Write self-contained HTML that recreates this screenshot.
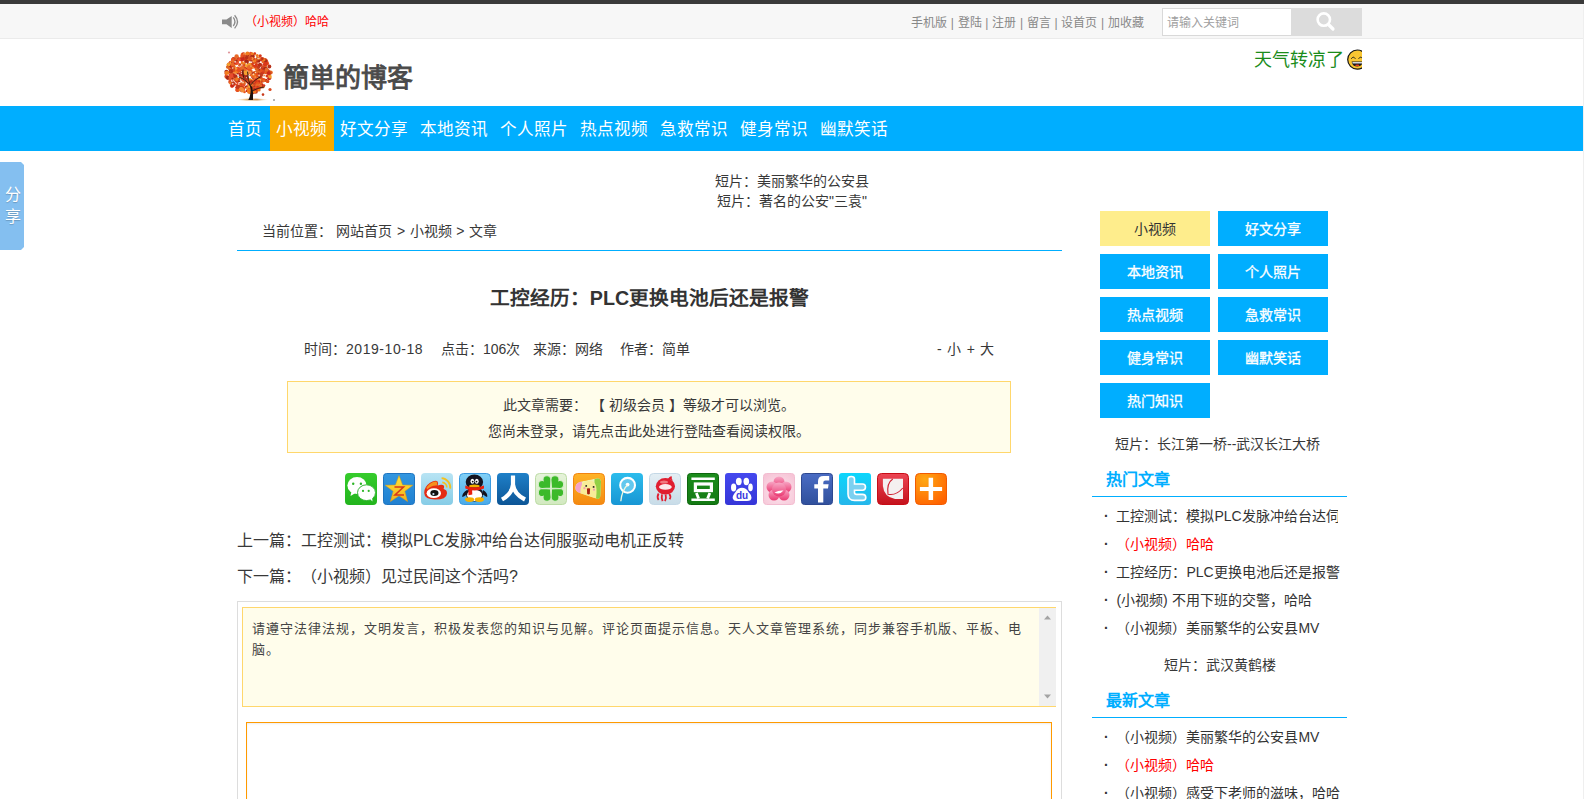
<!DOCTYPE html>
<html lang="zh-CN"><head><meta charset="utf-8">
<style>
*{margin:0;padding:0;box-sizing:border-box}
html,body{text-spacing-trim:space-all;width:1584px;height:799px;overflow:hidden;background:#fff;font-family:"Liberation Sans",sans-serif;color:#383838;font-size:14px}
.abs{position:absolute}
#topline{position:absolute;left:0;top:0;width:1584px;height:4px;background:#3a3a3a}
#topbar{position:absolute;left:0;top:4px;width:1584px;height:35px;background:#f7f7f7;border-bottom:1px solid #ebebeb}
.t12{font-size:12px;line-height:16px;white-space:nowrap}
#nav{position:absolute;left:0;top:106px;width:1584px;height:45px;background:#00aeff}
#nav .it{position:absolute;top:0;height:45px;line-height:47px;color:#fff;font-size:16.6px;padding:0 7.5px;white-space:nowrap;text-indent:-2px}
#nav .on{background:#f8ab00}
.side-btn{position:absolute;width:110px;height:35px;line-height:35px;padding-top:1px;text-align:center;color:#fff;background:#00aeff;font-size:14px;-webkit-text-stroke:0.3px #fff}
.li{position:absolute;left:1104px;font-size:14px;line-height:20px;white-space:nowrap;color:#333}
.red{color:#f00}
</style></head><body>
<div id="topline"></div>
<div id="topbar"></div>
<!-- speaker -->
<svg class="abs" style="left:218px;top:10px" width="26" height="24" viewBox="0 0 26 24"><path d="M4 9.6 L8.5 9.6 L13.7 5.9 L13.7 18 L8.5 14.2 L4 14.2 Z" fill="#8a8a8a"/><path d="M15.3 7.4 Q18.6 11.7 15.3 16" stroke="#8a8a8a" stroke-width="1.3" fill="none"/><path d="M16.6 5.3 Q22.4 11.8 16.6 18.4" stroke="#8a8a8a" stroke-width="1.3" fill="none"/></svg>
<div class="abs t12 red" style="left:245px;top:14px">（小视频）哈哈</div>
<div class="abs t12" style="left:911px;top:15px;color:#888;word-spacing:0.4px">手机版 | 登陆 | 注册 | 留言 | 设首页 | 加收藏</div>
<div class="abs" style="left:1162px;top:8px;width:130px;height:28px;background:#fff;border:1px solid #d9d9d9;border-right:none"></div>
<div class="abs t12" style="left:1167px;top:15px;color:#a0a0a0">请输入关键词</div>
<div class="abs" style="left:1291px;top:8px;width:71px;height:28px;background:#dcdcdc"></div>
<svg class="abs" style="left:1316px;top:12px" width="20" height="20" viewBox="0 0 20 20">
<circle cx="7.8" cy="7.6" r="6.2" stroke="#fff" stroke-width="2.6" fill="none"/>
<path d="M12.5 12.5l4.5 4.5" stroke="#fff" stroke-width="3.2" stroke-linecap="round"/>
</svg>

<!-- logo -->
<svg class="abs" style="left:222px;top:46px" width="56" height="58" viewBox="0 0 56 58"><defs><linearGradient id="gs" x1="0" x2="1"><stop offset="0" stop-color="#f6d9a0" stop-opacity="0"/><stop offset=".35" stop-color="#e0a050" stop-opacity=".8"/><stop offset=".65" stop-color="#c87828" stop-opacity=".8"/><stop offset="1" stop-color="#f6d9a0" stop-opacity="0"/></linearGradient></defs><ellipse cx="30" cy="53.6" rx="17" ry="1" fill="url(#gs)"/><circle cx="10.6" cy="31.3" r="2.2" fill="#f07a1e"/><circle cx="6.8" cy="32.4" r="1.3" fill="#f4a030"/><circle cx="8.9" cy="25.6" r="2.1" fill="#d9381a"/><circle cx="18.6" cy="29.3" r="1.7" fill="#e86a28"/><circle cx="15.1" cy="15.1" r="1.6" fill="#f07a1e"/><circle cx="16.6" cy="13.7" r="1.3" fill="#e8501c"/><circle cx="29.3" cy="22.4" r="1.1" fill="#e06420"/><circle cx="10.6" cy="16.3" r="1.5" fill="#c23a1e"/><circle cx="35.3" cy="14.6" r="1.9" fill="#f07a1e"/><circle cx="33.0" cy="27.0" r="1.9" fill="#a82818"/><circle cx="48.7" cy="26.5" r="2.1" fill="#e86a28"/><circle cx="26.0" cy="44.5" r="1.7" fill="#e8501c"/><circle cx="44.2" cy="34.4" r="1.6" fill="#b83018"/><circle cx="10.0" cy="39.8" r="2.1" fill="#e8501c"/><circle cx="31.4" cy="45.8" r="1.2" fill="#a82818"/><circle cx="40.5" cy="25.2" r="1.2" fill="#f28c3c"/><circle cx="32.3" cy="42.6" r="1.5" fill="#b83018"/><circle cx="15.6" cy="44.1" r="2.0" fill="#d9381a"/><circle cx="38.9" cy="39.6" r="1.1" fill="#f07a1e"/><circle cx="29.2" cy="18.6" r="1.8" fill="#f07a1e"/><circle cx="4.4" cy="25.7" r="2.0" fill="#a82818"/><circle cx="21.8" cy="21.4" r="1.6" fill="#e06420"/><circle cx="47.2" cy="26.9" r="2.3" fill="#c23a1e"/><circle cx="19.5" cy="44.8" r="1.4" fill="#a82818"/><circle cx="43.8" cy="26.4" r="1.8" fill="#e8501c"/><circle cx="36.8" cy="26.2" r="1.4" fill="#f4a030"/><circle cx="10.9" cy="15.0" r="1.6" fill="#d9381a"/><circle cx="40.9" cy="35.1" r="1.4" fill="#c23a1e"/><circle cx="14.6" cy="38.6" r="1.3" fill="#c23a1e"/><circle cx="9.7" cy="28.4" r="2.1" fill="#c8281c"/><circle cx="17.8" cy="18.7" r="1.4" fill="#c23a1e"/><circle cx="26.5" cy="35.6" r="2.0" fill="#d84a22"/><circle cx="33.7" cy="45.5" r="2.2" fill="#c23a1e"/><circle cx="30.8" cy="28.9" r="1.2" fill="#d84a22"/><circle cx="37.1" cy="24.5" r="1.9" fill="#b83018"/><circle cx="7.9" cy="36.0" r="1.7" fill="#d84a22"/><circle cx="35.0" cy="42.2" r="1.2" fill="#e06420"/><circle cx="8.6" cy="28.9" r="1.8" fill="#d9381a"/><circle cx="22.5" cy="45.9" r="1.3" fill="#e8501c"/><circle cx="39.5" cy="32.3" r="1.4" fill="#e8501c"/><circle cx="32.6" cy="37.8" r="1.8" fill="#c8281c"/><circle cx="33.4" cy="30.9" r="1.6" fill="#e94d2e"/><circle cx="16.3" cy="12.7" r="1.8" fill="#c8281c"/><circle cx="8.4" cy="16.4" r="1.7" fill="#e94d2e"/><circle cx="19.9" cy="7.8" r="1.1" fill="#f28c3c"/><circle cx="31.7" cy="29.2" r="1.5" fill="#c8281c"/><circle cx="32.6" cy="26.8" r="1.8" fill="#e86a28"/><circle cx="47.2" cy="32.2" r="2.0" fill="#c8281c"/><circle cx="32.2" cy="8.1" r="1.5" fill="#f28c3c"/><circle cx="20.4" cy="27.7" r="2.1" fill="#f4a030"/><circle cx="42.0" cy="29.5" r="1.1" fill="#f28c3c"/><circle cx="13.9" cy="37.2" r="1.8" fill="#d9381a"/><circle cx="32.9" cy="30.5" r="1.4" fill="#a82818"/><circle cx="24.6" cy="14.3" r="2.0" fill="#c23a1e"/><circle cx="11.9" cy="30.4" r="1.7" fill="#d84a22"/><circle cx="26.5" cy="23.3" r="1.8" fill="#f07a1e"/><circle cx="48.1" cy="29.6" r="1.2" fill="#f4a030"/><circle cx="10.4" cy="14.0" r="1.4" fill="#e8501c"/><circle cx="20.8" cy="32.5" r="1.8" fill="#d84a22"/><circle cx="36.8" cy="43.7" r="1.9" fill="#f07a1e"/><circle cx="15.5" cy="26.9" r="1.6" fill="#b83018"/><circle cx="31.2" cy="39.4" r="2.1" fill="#e06420"/><circle cx="36.6" cy="18.2" r="1.8" fill="#e94d2e"/><circle cx="28.5" cy="34.0" r="1.5" fill="#e8501c"/><circle cx="21.3" cy="7.6" r="1.4" fill="#c8281c"/><circle cx="38.1" cy="35.9" r="2.2" fill="#a82818"/><circle cx="14.6" cy="36.6" r="1.9" fill="#e86a28"/><circle cx="38.2" cy="9.8" r="1.6" fill="#d9381a"/><circle cx="32.1" cy="17.4" r="1.8" fill="#f28c3c"/><circle cx="22.2" cy="12.0" r="1.5" fill="#f4a030"/><circle cx="10.1" cy="20.4" r="1.6" fill="#e06420"/><circle cx="46.6" cy="29.7" r="1.4" fill="#c8281c"/><circle cx="32.9" cy="7.5" r="1.2" fill="#d9381a"/><circle cx="14.1" cy="14.8" r="2.1" fill="#d9381a"/><circle cx="22.5" cy="18.5" r="1.7" fill="#c8281c"/><circle cx="22.2" cy="9.6" r="1.7" fill="#e8501c"/><circle cx="31.5" cy="36.4" r="1.5" fill="#e86a28"/><circle cx="41.4" cy="22.1" r="2.3" fill="#c8281c"/><circle cx="10.9" cy="38.0" r="2.2" fill="#d9381a"/><circle cx="8.7" cy="37.0" r="1.6" fill="#f07a1e"/><circle cx="9.6" cy="31.4" r="2.2" fill="#a82818"/><circle cx="9.4" cy="21.7" r="1.7" fill="#e94d2e"/><circle cx="9.0" cy="30.5" r="1.3" fill="#e86a28"/><circle cx="39.8" cy="13.3" r="2.2" fill="#d9381a"/><circle cx="31.3" cy="45.5" r="2.3" fill="#b83018"/><circle cx="7.2" cy="22.6" r="1.5" fill="#e86a28"/><circle cx="34.6" cy="17.4" r="1.2" fill="#f07a1e"/><circle cx="18.6" cy="37.8" r="1.4" fill="#e8501c"/><circle cx="30.6" cy="45.3" r="1.6" fill="#e8501c"/><circle cx="32.5" cy="37.2" r="2.0" fill="#c8281c"/><circle cx="4.6" cy="30.5" r="2.2" fill="#d84a22"/><circle cx="36.4" cy="12.6" r="2.2" fill="#f07a1e"/><circle cx="10.2" cy="18.8" r="2.0" fill="#f07a1e"/><circle cx="14.7" cy="25.0" r="2.0" fill="#f28c3c"/><circle cx="34.7" cy="39.3" r="2.2" fill="#b83018"/><circle cx="21.3" cy="38.4" r="2.1" fill="#c23a1e"/><circle cx="31.8" cy="44.9" r="2.3" fill="#d84a22"/><circle cx="24.2" cy="41.0" r="1.6" fill="#d9381a"/><circle cx="9.2" cy="26.5" r="1.1" fill="#e8501c"/><circle cx="12.5" cy="25.5" r="2.1" fill="#c23a1e"/><circle cx="31.4" cy="31.1" r="1.3" fill="#d84a22"/><circle cx="5.8" cy="31.8" r="2.1" fill="#a82818"/><circle cx="24.7" cy="40.7" r="1.3" fill="#a82818"/><circle cx="44.0" cy="15.3" r="2.2" fill="#d84a22"/><circle cx="22.5" cy="34.9" r="1.8" fill="#b83018"/><circle cx="40.0" cy="39.8" r="1.1" fill="#e06420"/><circle cx="27.9" cy="28.6" r="1.4" fill="#e86a28"/><circle cx="15.7" cy="39.4" r="1.2" fill="#e86a28"/><circle cx="8.6" cy="17.5" r="1.8" fill="#e86a28"/><circle cx="31.7" cy="40.8" r="1.6" fill="#a82818"/><circle cx="12.9" cy="13.1" r="1.8" fill="#d84a22"/><circle cx="31.5" cy="42.3" r="1.9" fill="#d84a22"/><circle cx="30.0" cy="41.4" r="1.8" fill="#c8281c"/><circle cx="28.6" cy="44.2" r="2.1" fill="#c8281c"/><circle cx="21.5" cy="37.2" r="2.2" fill="#e06420"/><circle cx="28.2" cy="18.0" r="1.2" fill="#e06420"/><circle cx="31.0" cy="31.3" r="1.6" fill="#a82818"/><circle cx="33.6" cy="15.3" r="2.0" fill="#c8281c"/><circle cx="31.9" cy="42.1" r="2.1" fill="#d9381a"/><circle cx="32.1" cy="42.8" r="2.2" fill="#e94d2e"/><circle cx="38.4" cy="36.4" r="2.0" fill="#d84a22"/><circle cx="46.9" cy="26.6" r="2.1" fill="#f07a1e"/><circle cx="29.9" cy="29.2" r="1.8" fill="#d84a22"/><circle cx="39.3" cy="18.9" r="1.3" fill="#d9381a"/><circle cx="32.3" cy="44.6" r="2.3" fill="#f28c3c"/><circle cx="31.1" cy="29.6" r="2.2" fill="#f07a1e"/><circle cx="32.6" cy="29.8" r="1.6" fill="#a82818"/><circle cx="11.9" cy="25.5" r="1.8" fill="#e8501c"/><circle cx="23.5" cy="23.7" r="1.3" fill="#a82818"/><circle cx="8.1" cy="31.8" r="1.6" fill="#e06420"/><circle cx="21.1" cy="23.0" r="2.1" fill="#e94d2e"/><circle cx="42.1" cy="15.5" r="1.9" fill="#f28c3c"/><circle cx="42.1" cy="21.1" r="1.3" fill="#c23a1e"/><circle cx="46.4" cy="24.8" r="1.4" fill="#d9381a"/><circle cx="25.8" cy="8.9" r="2.1" fill="#a82818"/><circle cx="35.1" cy="35.5" r="1.7" fill="#e94d2e"/><circle cx="28.6" cy="9.1" r="1.6" fill="#e86a28"/><circle cx="34.4" cy="43.4" r="1.5" fill="#d9381a"/><circle cx="39.8" cy="27.6" r="1.9" fill="#c23a1e"/><circle cx="37.6" cy="30.1" r="2.3" fill="#b83018"/><circle cx="17.0" cy="40.8" r="1.8" fill="#d84a22"/><circle cx="40.7" cy="33.6" r="1.7" fill="#e06420"/><circle cx="20.6" cy="9.9" r="2.3" fill="#e8501c"/><circle cx="32.0" cy="31.2" r="1.4" fill="#f07a1e"/><circle cx="22.4" cy="29.4" r="1.3" fill="#a82818"/><circle cx="37.8" cy="27.5" r="1.4" fill="#e94d2e"/><circle cx="11.4" cy="22.3" r="2.3" fill="#c23a1e"/><circle cx="30.5" cy="21.5" r="1.6" fill="#f28c3c"/><circle cx="41.8" cy="34.0" r="2.0" fill="#e8501c"/><circle cx="10.2" cy="39.7" r="1.6" fill="#c8281c"/><circle cx="36.6" cy="15.0" r="1.8" fill="#a82818"/><circle cx="40.1" cy="22.4" r="1.7" fill="#c23a1e"/><circle cx="20.3" cy="40.5" r="1.7" fill="#b83018"/><circle cx="15.5" cy="22.8" r="2.0" fill="#b83018"/><circle cx="45.8" cy="29.8" r="1.8" fill="#f28c3c"/><circle cx="37.2" cy="41.5" r="1.6" fill="#e94d2e"/><circle cx="26.4" cy="22.3" r="2.3" fill="#e94d2e"/><circle cx="45.5" cy="35.4" r="1.6" fill="#f07a1e"/><circle cx="26.4" cy="44.4" r="1.2" fill="#d9381a"/><circle cx="44.0" cy="20.2" r="1.7" fill="#e06420"/><circle cx="20.5" cy="22.6" r="1.8" fill="#f07a1e"/><circle cx="41.8" cy="39.5" r="1.5" fill="#c8281c"/><circle cx="37.0" cy="36.3" r="1.9" fill="#f07a1e"/><circle cx="12.1" cy="17.2" r="1.9" fill="#e94d2e"/><circle cx="29.3" cy="12.2" r="2.3" fill="#b83018"/><circle cx="25.4" cy="16.9" r="1.2" fill="#b83018"/><circle cx="30.3" cy="11.1" r="1.5" fill="#b83018"/><circle cx="11.9" cy="15.8" r="1.9" fill="#e06420"/><circle cx="13.5" cy="13.7" r="1.3" fill="#e06420"/><circle cx="8.5" cy="26.6" r="1.3" fill="#f28c3c"/><circle cx="31.8" cy="28.0" r="1.4" fill="#a82818"/><circle cx="30.8" cy="27.5" r="1.4" fill="#b83018"/><circle cx="32.4" cy="29.4" r="1.9" fill="#d84a22"/><circle cx="28.6" cy="46.8" r="1.7" fill="#e94d2e"/><circle cx="29.7" cy="38.3" r="2.0" fill="#d9381a"/><circle cx="31.3" cy="13.9" r="2.1" fill="#f4a030"/><circle cx="28.3" cy="13.4" r="2.0" fill="#a82818"/><circle cx="31.5" cy="15.3" r="1.9" fill="#c23a1e"/><circle cx="19.0" cy="40.2" r="2.0" fill="#c8281c"/><circle cx="14.3" cy="32.2" r="1.2" fill="#e94d2e"/><circle cx="32.2" cy="29.6" r="1.8" fill="#f07a1e"/><circle cx="32.6" cy="14.1" r="2.1" fill="#e8501c"/><circle cx="35.6" cy="31.1" r="1.9" fill="#d9381a"/><circle cx="21.2" cy="13.4" r="2.0" fill="#e94d2e"/><circle cx="24.8" cy="34.3" r="1.5" fill="#e86a28"/><circle cx="16.6" cy="43.9" r="1.5" fill="#f07a1e"/><circle cx="7.1" cy="18.6" r="2.2" fill="#b83018"/><circle cx="8.0" cy="33.7" r="1.5" fill="#e94d2e"/><circle cx="30.4" cy="46.4" r="2.0" fill="#d84a22"/><circle cx="26.6" cy="39.0" r="1.5" fill="#e94d2e"/><circle cx="18.9" cy="12.9" r="2.1" fill="#e86a28"/><circle cx="8.2" cy="19.7" r="1.7" fill="#c23a1e"/><circle cx="17.8" cy="23.5" r="2.0" fill="#b83018"/><circle cx="30.5" cy="18.0" r="1.2" fill="#c8281c"/><circle cx="6.5" cy="18.6" r="1.9" fill="#f4a030"/><circle cx="11.5" cy="34.0" r="1.5" fill="#d84a22"/><circle cx="32.0" cy="29.7" r="2.0" fill="#e94d2e"/><circle cx="41.8" cy="35.0" r="1.3" fill="#e86a28"/><circle cx="32.4" cy="14.7" r="2.0" fill="#f07a1e"/><circle cx="28.1" cy="12.2" r="2.0" fill="#a82818"/><circle cx="14.7" cy="41.5" r="1.5" fill="#c8281c"/><circle cx="10.2" cy="27.4" r="2.0" fill="#e86a28"/><circle cx="23.0" cy="23.8" r="2.0" fill="#f28c3c"/><circle cx="25.7" cy="27.8" r="1.6" fill="#d9381a"/><circle cx="43.2" cy="14.0" r="1.9" fill="#d84a22"/><circle cx="25.0" cy="28.4" r="1.2" fill="#a82818"/><circle cx="36.0" cy="21.7" r="1.3" fill="#f28c3c"/><circle cx="20.0" cy="32.7" r="1.3" fill="#a82818"/><circle cx="15.0" cy="24.9" r="2.2" fill="#f07a1e"/><circle cx="23.8" cy="33.2" r="1.9" fill="#f4a030"/><circle cx="45.1" cy="17.4" r="2.0" fill="#e8501c"/><circle cx="8.1" cy="17.0" r="1.1" fill="#d9381a"/><circle cx="30.8" cy="38.3" r="1.8" fill="#c23a1e"/><circle cx="23.0" cy="11.5" r="1.4" fill="#c8281c"/><circle cx="37.7" cy="18.9" r="2.2" fill="#b83018"/><circle cx="11.4" cy="12.7" r="1.8" fill="#b83018"/><circle cx="12.4" cy="28.0" r="2.2" fill="#f28c3c"/><circle cx="5.6" cy="21.0" r="1.7" fill="#e06420"/><circle cx="18.1" cy="32.4" r="1.3" fill="#f4a030"/><circle cx="14.4" cy="36.6" r="1.7" fill="#b83018"/><circle cx="27.8" cy="22.1" r="2.2" fill="#e8501c"/><circle cx="41.4" cy="13.1" r="1.6" fill="#e06420"/><circle cx="22.5" cy="11.4" r="1.3" fill="#c8281c"/><circle cx="27.7" cy="19.2" r="2.2" fill="#f4a030"/><circle cx="8.8" cy="25.2" r="2.3" fill="#b83018"/><circle cx="21.4" cy="26.3" r="1.8" fill="#c8281c"/><circle cx="46.7" cy="27.0" r="2.1" fill="#c8281c"/><circle cx="36.6" cy="32.0" r="2.0" fill="#d9381a"/><circle cx="40.8" cy="16.0" r="1.2" fill="#e86a28"/><circle cx="8.8" cy="17.1" r="1.5" fill="#f4a030"/><circle cx="30.2" cy="35.0" r="1.9" fill="#f4a030"/><circle cx="31.2" cy="18.6" r="1.8" fill="#d84a22"/><circle cx="4.8" cy="27.5" r="2.3" fill="#e94d2e"/><circle cx="24.2" cy="32.0" r="1.5" fill="#f07a1e"/><circle cx="23.6" cy="22.2" r="1.2" fill="#c8281c"/><circle cx="37.5" cy="34.7" r="1.7" fill="#f4a030"/><circle cx="35.2" cy="12.4" r="1.1" fill="#a82818"/><circle cx="22.8" cy="13.2" r="1.5" fill="#d9381a"/><circle cx="24.3" cy="27.3" r="2.3" fill="#f4a030"/><circle cx="22.4" cy="7.9" r="1.3" fill="#f28c3c"/><circle cx="14.8" cy="37.3" r="1.5" fill="#e94d2e"/><circle cx="27.0" cy="11.7" r="1.2" fill="#e06420"/><circle cx="32.4" cy="43.3" r="1.5" fill="#b83018"/><circle cx="9.0" cy="20.2" r="1.5" fill="#a82818"/><circle cx="33.5" cy="31.0" r="1.2" fill="#f28c3c"/><circle cx="20.1" cy="20.5" r="1.3" fill="#e8501c"/><circle cx="35.4" cy="13.4" r="1.2" fill="#e06420"/><circle cx="48.2" cy="30.9" r="1.6" fill="#f4a030"/><circle cx="45.7" cy="35.4" r="1.6" fill="#d84a22"/><circle cx="33.0" cy="33.9" r="1.3" fill="#e86a28"/><circle cx="16.8" cy="34.5" r="1.6" fill="#e8501c"/><circle cx="24.0" cy="11.1" r="1.5" fill="#f4a030"/><circle cx="31.0" cy="10.8" r="1.8" fill="#e8501c"/><circle cx="25.8" cy="35.6" r="1.5" fill="#f07a1e"/><circle cx="37.3" cy="34.5" r="1.7" fill="#f4a030"/><circle cx="24.6" cy="33.1" r="2.0" fill="#b83018"/><circle cx="28.7" cy="7.6" r="1.8" fill="#e94d2e"/><circle cx="14.3" cy="17.4" r="1.8" fill="#e06420"/><circle cx="42.5" cy="25.6" r="2.0" fill="#e06420"/><circle cx="23.2" cy="25.4" r="1.9" fill="#f4a030"/><circle cx="36.1" cy="31.8" r="1.8" fill="#e86a28"/><circle cx="23.1" cy="32.1" r="2.1" fill="#b83018"/><circle cx="18.9" cy="28.4" r="2.3" fill="#c8281c"/><circle cx="27.7" cy="42.1" r="1.8" fill="#d9381a"/><circle cx="15.8" cy="22.9" r="2.2" fill="#e94d2e"/><circle cx="20.2" cy="22.6" r="2.1" fill="#b83018"/><circle cx="21.2" cy="15.6" r="2.0" fill="#e94d2e"/><circle cx="31.2" cy="19.2" r="1.8" fill="#d9381a"/><circle cx="12.9" cy="30.4" r="2.0" fill="#f28c3c"/><circle cx="39.0" cy="40.3" r="2.1" fill="#a82818"/><circle cx="13.1" cy="16.0" r="2.0" fill="#c8281c"/><circle cx="31.3" cy="40.0" r="1.3" fill="#a82818"/><circle cx="37.0" cy="35.5" r="1.5" fill="#c8281c"/><circle cx="25.1" cy="42.0" r="1.5" fill="#f28c3c"/><circle cx="30.5" cy="9.9" r="2.0" fill="#a82818"/><circle cx="43.2" cy="22.8" r="1.7" fill="#a82818"/><circle cx="43.5" cy="15.1" r="1.8" fill="#a82818"/><circle cx="26.7" cy="12.7" r="2.3" fill="#e86a28"/><circle cx="14.1" cy="34.0" r="1.8" fill="#d84a22"/><circle cx="18.7" cy="39.6" r="1.6" fill="#e8501c"/><circle cx="24.3" cy="31.1" r="2.0" fill="#a82818"/><circle cx="24.6" cy="11.2" r="2.0" fill="#b83018"/><circle cx="42.0" cy="14.0" r="1.4" fill="#f07a1e"/><circle cx="27.5" cy="45.7" r="2.3" fill="#f07a1e"/><circle cx="21.0" cy="12.9" r="1.4" fill="#b83018"/><circle cx="14.6" cy="10.4" r="2.2" fill="#e86a28"/><circle cx="44.3" cy="23.3" r="2.1" fill="#a82818"/><circle cx="18.2" cy="23.6" r="1.9" fill="#a82818"/><circle cx="7.1" cy="18.9" r="1.2" fill="#f4a030"/><circle cx="40.8" cy="40.7" r="1.8" fill="#f07a1e"/><circle cx="37.5" cy="26.8" r="1.5" fill="#e94d2e"/><circle cx="33.5" cy="38.7" r="1.6" fill="#d84a22"/><circle cx="15.9" cy="34.1" r="1.8" fill="#e8501c"/><circle cx="21.3" cy="39.6" r="1.5" fill="#e94d2e"/><circle cx="5.0" cy="27.0" r="2.3" fill="#f07a1e"/><circle cx="33.8" cy="20.5" r="2.1" fill="#e86a28"/><circle cx="34.4" cy="21.4" r="2.1" fill="#e94d2e"/><circle cx="28.8" cy="25.3" r="1.9" fill="#e86a28"/><circle cx="36.5" cy="26.5" r="1.9" fill="#e06420"/><circle cx="47.4" cy="20.5" r="1.9" fill="#b83018"/><circle cx="24.6" cy="15.6" r="2.2" fill="#a82818"/><circle cx="24.6" cy="19.5" r="1.9" fill="#f4a030"/><circle cx="20.6" cy="28.7" r="1.4" fill="#b83018"/><circle cx="40.0" cy="38.4" r="1.4" fill="#e86a28"/><circle cx="28.2" cy="43.3" r="2.0" fill="#e94d2e"/><circle cx="31.8" cy="12.9" r="1.2" fill="#d84a22"/><circle cx="28.1" cy="37.8" r="2.2" fill="#f28c3c"/><circle cx="27.7" cy="34.1" r="1.9" fill="#f07a1e"/><circle cx="41.2" cy="25.4" r="1.7" fill="#d84a22"/><circle cx="28.1" cy="25.9" r="1.8" fill="#d84a22"/><circle cx="26.4" cy="45.0" r="1.2" fill="#b83018"/><circle cx="36.2" cy="26.2" r="1.3" fill="#e86a28"/><circle cx="17.3" cy="24.2" r="2.2" fill="#e8501c"/><circle cx="11.1" cy="13.3" r="1.8" fill="#e8501c"/><circle cx="40.7" cy="20.6" r="1.3" fill="#d84a22"/><circle cx="30.1" cy="7.7" r="1.5" fill="#f07a1e"/><circle cx="29.8" cy="12.5" r="1.7" fill="#f28c3c"/><circle cx="20.0" cy="13.4" r="2.2" fill="#c8281c"/><circle cx="10.2" cy="16.9" r="1.2" fill="#a82818"/><circle cx="27.9" cy="40.2" r="2.0" fill="#f4a030"/><circle cx="22.5" cy="9.9" r="1.4" fill="#d84a22"/><circle cx="29.6" cy="42.0" r="1.7" fill="#e8501c"/><circle cx="33.0" cy="45.9" r="1.2" fill="#f07a1e"/><circle cx="33.1" cy="20.6" r="1.3" fill="#e8501c"/><circle cx="11.0" cy="15.3" r="1.7" fill="#e86a28"/><circle cx="24.9" cy="44.9" r="1.2" fill="#c8281c"/><circle cx="11.6" cy="20.5" r="2.0" fill="#e06420"/><circle cx="22.8" cy="23.5" r="1.6" fill="#e86a28"/><circle cx="19.6" cy="41.5" r="1.7" fill="#b83018"/><circle cx="28.0" cy="12.5" r="1.9" fill="#d84a22"/><circle cx="31.8" cy="35.8" r="1.3" fill="#e86a28"/><circle cx="17.2" cy="13.6" r="1.6" fill="#e94d2e"/><circle cx="15.1" cy="33.3" r="1.4" fill="#e8501c"/><circle cx="39.9" cy="39.5" r="1.8" fill="#c8281c"/><circle cx="35.8" cy="37.6" r="2.0" fill="#e8501c"/><circle cx="40.8" cy="27.1" r="1.7" fill="#d9381a"/><circle cx="17.0" cy="33.7" r="1.6" fill="#d9381a"/><circle cx="44.6" cy="23.8" r="2.0" fill="#e86a28"/><circle cx="17.3" cy="19.6" r="1.2" fill="#e06420"/><circle cx="20.8" cy="29.7" r="1.4" fill="#b83018"/><circle cx="15.0" cy="44.0" r="1.8" fill="#e8501c"/><circle cx="35.6" cy="39.9" r="2.3" fill="#e86a28"/><circle cx="16.2" cy="40.9" r="2.1" fill="#c23a1e"/><circle cx="34.8" cy="22.9" r="2.1" fill="#e06420"/><circle cx="12.0" cy="39.0" r="1.4" fill="#e94d2e"/><circle cx="26.9" cy="44.9" r="2.1" fill="#f07a1e"/><circle cx="29.5" cy="35.8" r="1.7" fill="#b83018"/><circle cx="11.1" cy="29.2" r="1.9" fill="#c8281c"/><circle cx="33.1" cy="19.8" r="1.6" fill="#d9381a"/><circle cx="37.7" cy="29.9" r="2.2" fill="#c23a1e"/><circle cx="36.0" cy="27.8" r="1.4" fill="#a82818"/><circle cx="10.1" cy="20.1" r="1.4" fill="#d9381a"/><circle cx="20.9" cy="32.9" r="2.2" fill="#e94d2e"/><circle cx="33.6" cy="34.4" r="2.1" fill="#d9381a"/><circle cx="39.1" cy="28.3" r="1.6" fill="#d9381a"/><circle cx="34.9" cy="16.9" r="1.4" fill="#d84a22"/><circle cx="20.5" cy="17.0" r="1.8" fill="#f07a1e"/><circle cx="34.9" cy="28.8" r="1.8" fill="#e8501c"/><circle cx="30.2" cy="39.4" r="1.7" fill="#e86a28"/><circle cx="38.8" cy="39.7" r="1.4" fill="#e86a28"/><circle cx="13.4" cy="30.5" r="2.2" fill="#b83018"/><circle cx="11.9" cy="23.8" r="1.3" fill="#d84a22"/><circle cx="33.6" cy="19.6" r="1.5" fill="#e94d2e"/><circle cx="20.1" cy="21.9" r="2.1" fill="#e86a28"/><circle cx="15.0" cy="15.6" r="2.1" fill="#e86a28"/><circle cx="21.1" cy="42.7" r="2.2" fill="#e06420"/><circle cx="14.1" cy="22.5" r="1.2" fill="#f4a030"/><circle cx="33.8" cy="19.6" r="1.9" fill="#d9381a"/><circle cx="28.9" cy="20.1" r="1.7" fill="#f07a1e"/><circle cx="17.0" cy="34.6" r="1.7" fill="#b83018"/><circle cx="30.3" cy="46.0" r="1.3" fill="#f4a030"/><circle cx="35.6" cy="41.1" r="1.4" fill="#d9381a"/><circle cx="25.5" cy="7.5" r="2.1" fill="#f07a1e"/><circle cx="10.3" cy="18.4" r="1.8" fill="#e86a28"/><circle cx="44.7" cy="16.9" r="1.2" fill="#d9381a"/><circle cx="36.4" cy="21.3" r="1.6" fill="#c23a1e"/><circle cx="20.7" cy="43.2" r="2.2" fill="#d9381a"/><circle cx="39.5" cy="28.6" r="2.2" fill="#c23a1e"/><circle cx="20.6" cy="44.3" r="2.2" fill="#f28c3c"/><circle cx="9.3" cy="29.9" r="2.2" fill="#e94d2e"/><circle cx="44.9" cy="30.1" r="1.4" fill="#d9381a"/><circle cx="14.3" cy="15.3" r="1.6" fill="#a82818"/><circle cx="31.9" cy="28.9" r="1.7" fill="#f07a1e"/><circle cx="10.8" cy="39.9" r="1.1" fill="#c8281c"/><circle cx="21.8" cy="17.1" r="1.7" fill="#f07a1e"/><circle cx="35.0" cy="25.7" r="1.3" fill="#e06420"/><circle cx="26.0" cy="36.3" r="1.7" fill="#d84a22"/><circle cx="27.8" cy="26.6" r="1.8" fill="#f28c3c"/><circle cx="27.1" cy="21.1" r="2.1" fill="#e86a28"/><circle cx="39.1" cy="24.5" r="1.5" fill="#e8501c"/><circle cx="19.2" cy="42.6" r="1.9" fill="#f28c3c"/><circle cx="31.9" cy="34.2" r="1.3" fill="#e94d2e"/><circle cx="15.2" cy="17.0" r="1.8" fill="#e94d2e"/><circle cx="14.9" cy="33.1" r="1.9" fill="#f07a1e"/><circle cx="27.4" cy="36.9" r="1.5" fill="#c8281c"/><circle cx="43.1" cy="18.2" r="2.2" fill="#d9381a"/><circle cx="35.2" cy="9.4" r="1.5" fill="#f07a1e"/><circle cx="8.2" cy="25.5" r="1.1" fill="#c23a1e"/><circle cx="40.4" cy="12.7" r="1.2" fill="#b83018"/><circle cx="11.2" cy="37.3" r="1.9" fill="#b83018"/><path d="M28.5 40 Q25 34 17 31 M28.5 39 Q33 33 38 31 M28.6 41 Q26 34 25.5 26 M30 45 Q35 42 42 41 M22 32.5 Q20 28 21 24" stroke="#2b1a12" stroke-width="1" fill="none" stroke-linecap="round" opacity=".9"/><circle cx="24.3" cy="17.6" r="0.9" fill="#fff4e4" opacity=".75"/><circle cx="21.0" cy="36.4" r="0.9" fill="#fff4e4" opacity=".75"/><circle cx="36.8" cy="12.6" r="0.8" fill="#fff4e4" opacity=".75"/><circle cx="11.4" cy="34.3" r="0.8" fill="#fff4e4" opacity=".75"/><circle cx="35.4" cy="12.2" r="0.6" fill="#fff4e4" opacity=".75"/><circle cx="14.5" cy="37.5" r="0.6" fill="#fff4e4" opacity=".75"/><circle cx="27.5" cy="28.8" r="0.8" fill="#fff4e4" opacity=".75"/><circle cx="45.3" cy="20.1" r="0.6" fill="#fff4e4" opacity=".75"/><circle cx="21.4" cy="15.6" r="0.8" fill="#fff4e4" opacity=".75"/><circle cx="10.7" cy="37.7" r="1.0" fill="#fff4e4" opacity=".75"/><circle cx="43.0" cy="31.6" r="0.6" fill="#fff4e4" opacity=".75"/><circle cx="37.1" cy="29.4" r="0.9" fill="#fff4e4" opacity=".75"/><circle cx="33.6" cy="26.5" r="0.7" fill="#fff4e4" opacity=".75"/><circle cx="41.4" cy="29.1" r="0.7" fill="#fff4e4" opacity=".75"/><circle cx="18.5" cy="34.2" r="0.9" fill="#fff4e4" opacity=".75"/><circle cx="32.3" cy="18.4" r="0.7" fill="#fff4e4" opacity=".75"/><circle cx="13.2" cy="15.8" r="1.0" fill="#fff4e4" opacity=".75"/><circle cx="13.4" cy="36.8" r="0.8" fill="#fff4e4" opacity=".75"/><circle cx="28.9" cy="20.0" r="0.6" fill="#fff4e4" opacity=".75"/><circle cx="42.0" cy="38.0" r="0.6" fill="#fff4e4" opacity=".75"/><circle cx="19.4" cy="27.3" r="0.7" fill="#fff4e4" opacity=".75"/><circle cx="41.8" cy="28.5" r="0.6" fill="#fff4e4" opacity=".75"/><circle cx="18.9" cy="19.9" r="0.6" fill="#fff4e4" opacity=".75"/><circle cx="14.2" cy="28.1" r="0.6" fill="#fff4e4" opacity=".75"/><circle cx="31.4" cy="28.3" r="0.9" fill="#fff4e4" opacity=".75"/><circle cx="24.4" cy="31.7" r="0.6" fill="#fff4e4" opacity=".75"/><circle cx="6.1" cy="28.7" r="0.6" fill="#fff4e4" opacity=".75"/><circle cx="36.1" cy="17.2" r="0.7" fill="#fff4e4" opacity=".75"/><circle cx="31.0" cy="15.8" r="0.5" fill="#fff4e4" opacity=".75"/><circle cx="10.7" cy="22.1" r="0.8" fill="#fff4e4" opacity=".75"/><path d="M26.3 54 Q29.8 47 28.2 40 L30.2 40.5 Q31.6 47.5 31 54 Z" fill="#1e120c"/><circle cx="48" cy="43.5" r="1.6" fill="#d9481c"/><circle cx="41" cy="48.6" r="1.3" fill="#c83a1c"/><circle cx="52" cy="54" r=".8" fill="#555"/><circle cx="7" cy="6.5" r="1.1" fill="#c9505a" opacity=".6"/></svg>
<div class="abs" style="left:283px;top:60px;font-size:26px;line-height:36px;font-weight:normal;-webkit-text-stroke:0.9px #4a4a4a;color:#4a4a4a;white-space:nowrap">簡単的博客</div>

<div class="abs" style="left:1254px;top:48px;font-size:18px;line-height:24px;color:#1a8c1a;white-space:nowrap">天气转凉了</div>
<div class="abs" style="left:1347px;top:49px;width:15px;height:22px;overflow:hidden"><svg width="21" height="22" viewBox="0 0 21 22"><circle cx="10.3" cy="10.6" r="9.6" fill="#f9c632" stroke="#151515" stroke-width="1.2"/><path d="M4.3 9.8 Q6.3 6.6 8.4 9.8 M11.6 9.8 Q13.6 6.6 15.7 9.8" stroke="#222" stroke-width="1" fill="none"/><path d="M4.6 12.4 L16 12.4 Q15 17.6 10.3 17.6 Q5.6 17.6 4.6 12.4 Z" fill="#1a1a1a"/><path d="M5.4 13 H15.2 V14.6 H5.6 Z" fill="#d4d6dc"/><ellipse cx="10.3" cy="16.3" rx="2.1" ry=".9" fill="#e83a20"/></svg></div>

<div id="nav">
<div class="it" style="left:222px">首页</div>
<div class="it on" style="left:270px">小视频</div>
<div class="it" style="left:334px">好文分享</div>
<div class="it" style="left:414px">本地资讯</div>
<div class="it" style="left:494px">个人照片</div>
<div class="it" style="left:574px">热点视频</div>
<div class="it" style="left:654px">急救常识</div>
<div class="it" style="left:734px">健身常识</div>
<div class="it" style="left:814px">幽默笑话</div>
</div>

<!-- share tab -->
<div class="abs" style="left:0;top:162px;width:24px;height:88px;background:#84bff0;clip-path:polygon(0 0,21px 0,24px 3px,24px 85px,21px 88px,0 88px)"></div>
<div class="abs" style="left:5px;top:184px;width:18px;font-size:16px;line-height:22px;color:#fff;text-shadow:0 1px 1px rgba(0,0,0,.2)">分<br>享</div>

<!-- short clips -->
<div class="abs" style="left:592px;top:171px;width:400px;text-align:center;line-height:20px">短片：美丽繁华的公安县<br>短片：著名的公安"三袁"</div>

<!-- breadcrumb -->
<div class="abs" style="left:262px;top:221px;line-height:20px;white-space:nowrap;word-spacing:0.6px">当前位置： 网站首页 &gt; 小视频 &gt; 文章</div>
<div class="abs" style="left:237px;top:250px;width:825px;height:1px;background:#00aeff"></div>

<div class="abs" style="left:237px;top:284px;width:825px;text-align:center;font-size:19.7px;line-height:28px;font-weight:bold;color:#333">工控经历：PLC更换电池后还是报警</div>

<div class="abs" style="left:304px;top:339px;line-height:20px;white-space:nowrap">时间：<span style="letter-spacing:.55px">2019-10-18</span></div>
<div class="abs" style="left:441px;top:339px;line-height:20px;white-space:nowrap">点击：106次</div>
<div class="abs" style="left:533px;top:339px;line-height:20px;white-space:nowrap">来源：网络</div>
<div class="abs" style="left:620px;top:339px;line-height:20px;white-space:nowrap">作者：简单</div>
<div class="abs" style="left:937px;top:339px;line-height:20px;white-space:nowrap;word-spacing:1.6px">- 小 + 大</div>

<div class="abs" style="left:287px;top:381px;width:724px;height:72px;background:#fffdeb;border:1px solid #ffd76c;text-align:center;line-height:26px;padding-top:10px">此文章需要： 【 初级会员 】等级才可以浏览。<br>您尚未登录，请先点击此处进行登陆查看阅读权限。</div>

<div id="share"><svg class="abs" style="left:345px;top:473px" width="32" height="32" viewBox="0 0 32 32"><defs><linearGradient id="g1" x1="0" y1="0" x2="0" y2="1"><stop offset="0" stop-color="#36cc2c"/><stop offset="1" stop-color="#22b41c"/></linearGradient></defs><rect x="0" y="0" width="32" height="32" rx="4" fill="url(#g1)"/><ellipse cx="12" cy="12.6" rx="9.6" ry="8.5" fill="#fff"/><path d="M6.5 18 L5.5 23 L10.5 20 Z" fill="#fff"/><circle cx="8.2" cy="10.8" r="1.2" fill="#2cb526"/><circle cx="15.9" cy="10.8" r="1.2" fill="#2cb526"/><ellipse cx="21.5" cy="19.7" rx="9" ry="7.9" fill="#fff" stroke="#3ab53a" stroke-width="1"/><path d="M24 25 L27.5 28.5 L27 24 Z" fill="#fff"/><circle cx="18" cy="17.9" r="1.1" fill="#2cb526"/><circle cx="23.7" cy="17.9" r="1.1" fill="#2cb526"/></svg>
<svg class="abs" style="left:383px;top:473px" width="32" height="32" viewBox="0 0 32 32"><defs><linearGradient id="g2" x1="0" y1="0" x2="0" y2="1"><stop offset="0" stop-color="#3397e0"/><stop offset="1" stop-color="#2080d0"/></linearGradient></defs><rect x=".5" y=".5" width="31" height="31" rx="3" fill="url(#g2)" stroke="#1f74c0" stroke-width="1"/><defs><linearGradient id="st" x1="0" y1="0" x2="0" y2="1"><stop offset="0" stop-color="#ffe73a"/><stop offset="1" stop-color="#f3b01c"/></linearGradient></defs><path d="M16 2.6 L19.6 12 L29.8 12.2 L21.8 18.3 L24.6 28.6 L16 22.8 L7.4 28.6 L10.2 18.3 L2.2 12.2 L12.4 12 Z" fill="url(#st)" stroke="#e49a10" stroke-width=".5"/><path d="M11.5 14 H20.5 L12 22 H21" stroke="#d83a1a" stroke-width="1.6" fill="none"/></svg>
<svg class="abs" style="left:421px;top:473px" width="32" height="32" viewBox="0 0 32 32"><defs><linearGradient id="g3" x1="0" y1="0" x2="0" y2="1"><stop offset="0" stop-color="#b8e4f4"/><stop offset="1" stop-color="#86cce6"/></linearGradient></defs><rect x="0" y="0" width="32" height="32" rx="4" fill="url(#g3)"/><path d="M3.2 20 Q3 14 9 9.8 Q14.5 6.5 16.6 8.6 Q17.6 10.5 16.6 12.6 Q21 10.8 22.8 12.6 Q23.6 14 22.6 16 Q26.2 17 26 20.4 Q25.6 26.6 14 26.6 Q3.4 26.4 3.2 20 Z" fill="#e42c14"/><path d="M5.5 14.5 Q10 8.5 15.5 8.6 Q16.8 10 15.8 12.5 Q11 12 6 16.5 Z" fill="#f6901e"/><ellipse cx="12.8" cy="20.2" rx="7.2" ry="4.9" fill="#fff"/><ellipse cx="13.4" cy="20" rx="4.1" ry="2.9" fill="#111"/><circle cx="12.4" cy="21" r="1.1" fill="#cfe0f0"/><path d="M21.3 9.4 A5 5 0 0 1 25.8 14.4" stroke="#f4c020" stroke-width="1.7" fill="none"/><path d="M20.6 5.2 A9.3 9.3 0 0 1 29.2 15.6" stroke="#f4c020" stroke-width="1.8" fill="none"/></svg>
<svg class="abs" style="left:459px;top:473px" width="32" height="32" viewBox="0 0 32 32"><defs><linearGradient id="g4" x1="0" y1="0" x2="0" y2="1"><stop offset="0" stop-color="#82d0f6"/><stop offset="1" stop-color="#48aaea"/></linearGradient></defs><rect x=".5" y=".5" width="31" height="31" rx="4" fill="url(#g4)" stroke="#3a9ae0" stroke-width="1"/><path d="M8 17 Q3 20 3.2 24 Q4.5 24 8.5 21 Z M24 17 Q29 20 28.2 24 Q27 24 23.5 21 Z" fill="#141420"/><ellipse cx="15.6" cy="21" rx="8.6" ry="7.5" fill="#141420"/><ellipse cx="15.4" cy="9" rx="8.7" ry="7.4" fill="#141420"/><ellipse cx="15.6" cy="22.3" rx="7.5" ry="5.6" fill="#fff"/><ellipse cx="13.4" cy="8.3" rx="1.9" ry="2.5" fill="#fff"/><ellipse cx="17.8" cy="8.3" rx="1.9" ry="2.5" fill="#fff"/><circle cx="13.7" cy="8.6" r=".9" fill="#111"/><circle cx="17.5" cy="8.6" r=".9" fill="#111"/><ellipse cx="15.4" cy="13" rx="5.4" ry="1.6" fill="#f4b000"/><path d="M6.3 12.5 Q15.6 16.5 25 12.5 L25 15.5 Q15.6 19.5 6.3 15.5 Z" fill="#e8200e"/><path d="M9.3 16.2 L9.5 22.3 L13.3 21.5 L13.1 17 Z" fill="#e8200e"/><ellipse cx="10.6" cy="26.6" rx="4.5" ry="2.3" fill="#f6b000"/><ellipse cx="20.4" cy="26.6" rx="4.6" ry="2.3" fill="#f6b000"/></svg>
<svg class="abs" style="left:497px;top:473px" width="32" height="32" viewBox="0 0 32 32"><defs><linearGradient id="g5" x1="0" y1="0" x2="0" y2="1"><stop offset="0" stop-color="#1f80c8"/><stop offset="1" stop-color="#0c5596"/></linearGradient></defs><rect x="0" y="0" width="32" height="32" rx="4" fill="url(#g5)"/><path d="M16 2.5 V11.5 Q15 21 5 26.5 M16 11.5 Q17 21 28 26.5" stroke="#fff" stroke-width="4.2" fill="none"/></svg>
<svg class="abs" style="left:535px;top:473px" width="32" height="32" viewBox="0 0 32 32"><defs><linearGradient id="g6" x1="0" y1="0" x2="0" y2="1"><stop offset="0" stop-color="#e6f3da"/><stop offset="1" stop-color="#d2e9c0"/></linearGradient></defs><rect x=".5" y=".5" width="31" height="31" rx="4" fill="url(#g6)" stroke="#bcdca6" stroke-width="1"/><g transform="translate(16 15.5)" fill="#3cba2a" stroke="#d8edca" stroke-width="1"><path transform="rotate(-45)" d="M0 -0.8 L-6.3 -6.2 A3.7 3.7 0 0 1 -0.3 -11.6 L0 -11 L0.3 -11.6 A3.7 3.7 0 0 1 6.3 -6.2 Z"/><path transform="rotate(45)" d="M0 -0.8 L-6.3 -6.2 A3.7 3.7 0 0 1 -0.3 -11.6 L0 -11 L0.3 -11.6 A3.7 3.7 0 0 1 6.3 -6.2 Z"/><path transform="rotate(135)" d="M0 -0.8 L-6.3 -6.2 A3.7 3.7 0 0 1 -0.3 -11.6 L0 -11 L0.3 -11.6 A3.7 3.7 0 0 1 6.3 -6.2 Z"/><path transform="rotate(-135)" d="M0 -0.8 L-6.3 -6.2 A3.7 3.7 0 0 1 -0.3 -11.6 L0 -11 L0.3 -11.6 A3.7 3.7 0 0 1 6.3 -6.2 Z"/></g></svg>
<svg class="abs" style="left:573px;top:473px" width="32" height="32" viewBox="0 0 32 32"><defs><linearGradient id="g7" x1="0" y1="0" x2="0" y2="1"><stop offset="0" stop-color="#ffb428"/><stop offset="1" stop-color="#f48a10"/></linearGradient></defs><rect x=".5" y=".5" width="31" height="31" rx="4" fill="url(#g7)" stroke="#f28410" stroke-width="1"/><clipPath id="pick"><path d="M2.2 15 Q2 10.5 7 8.8 L24 5.2 Q28.2 4.6 28 9 L27.6 22.5 Q27.3 27 23 25.6 L6.5 20 Q2.2 18.5 2.2 15 Z"/></clipPath><g clip-path="url(#pick)"><path d="M2.2 15 Q2 10.5 7 8.8 L24 5.2 Q28.2 4.6 28 9 L27.6 22.5 Q27.3 27 23 25.6 L6.5 20 Q2.2 18.5 2.2 15 Z" fill="#eef2b4"/><path d="M21.5 6.2 L24 5.2 Q28.2 4.6 28 9 L27.6 22.5 Q27.3 27 23 25.6 L21.5 25 Z" fill="#92d044"/><path d="M2.2 15 Q2 10.5 7 8.8 L9 8.4 L8.6 20.8 L6.5 20 Q2.2 18.5 2.2 15 Z" fill="#f4a2c8"/><path d="M7.5 25.6 Q6.5 12 11 9 Q16 6.5 20 8.5 Q24 11 23.5 20 L23 25.6 Z" fill="#f8ec98"/></g><circle cx="13.2" cy="12.9" r=".95" fill="#222"/><circle cx="20.6" cy="13.9" r=".95" fill="#222"/><path d="M13.9 15.5 Q15.5 14.8 17.1 15.5 L16.8 21 Q15.5 21.8 14.2 21 Z" fill="#a81e10"/><circle cx="11.4" cy="15.2" r="1.1" fill="#f4a0b0"/><circle cx="21" cy="16.7" r="1.1" fill="#f4a0b0"/></svg>
<svg class="abs" style="left:611px;top:473px" width="32" height="32" viewBox="0 0 32 32"><defs><linearGradient id="g8" x1="0" y1="0" x2="0" y2="1"><stop offset="0" stop-color="#2cbcec"/><stop offset="1" stop-color="#1896d4"/></linearGradient></defs><rect x="0" y="0" width="32" height="32" rx="4" fill="url(#g8)"/><circle cx="16.6" cy="12.3" r="6.6" fill="#62c8ee"/><circle cx="16.6" cy="12.3" r="7.4" stroke="#fff" stroke-width="2.1" fill="none"/><circle cx="16.6" cy="11.6" r="1.9" fill="#fff"/><path d="M16.4 12 Q11 17 9.8 28.2" stroke="#f0f8e0" stroke-width="1.3" fill="none"/></svg>
<svg class="abs" style="left:649px;top:473px" width="32" height="32" viewBox="0 0 32 32"><defs><linearGradient id="g9" x1="0" y1="0" x2="0" y2="1"><stop offset="0" stop-color="#e4eef4"/><stop offset="1" stop-color="#c8dce8"/></linearGradient></defs><rect x=".5" y=".5" width="31" height="31" rx="4" fill="url(#g9)" stroke="#c4d8e6" stroke-width="1"/><ellipse cx="16.4" cy="13.3" rx="9.6" ry="8.3" fill="#e01e30"/><path d="M19 5.8 Q21 2.6 22.8 3.4 Q22.2 5.5 24 7.5 Z" fill="#e01e30"/><ellipse cx="16.4" cy="13.9" rx="6.4" ry="2.8" fill="#fff" opacity=".9"/><ellipse cx="15" cy="9" rx="4" ry="1.6" fill="#f8a0a0" opacity=".7"/><path d="M9.6 20.5 Q7.6 24 9.6 27 M13 21.4 Q12.2 25 13.6 28.2 M16.6 21.6 Q17.6 25 16 28.2 M20.2 20.8 Q22.4 23.2 20.6 26.2" stroke="#e01e30" stroke-width="1.8" fill="none"/></svg>
<svg class="abs" style="left:687px;top:473px" width="32" height="32" viewBox="0 0 32 32"><defs><linearGradient id="g10" x1="0" y1="0" x2="0" y2="1"><stop offset="0" stop-color="#1c8c1c"/><stop offset="1" stop-color="#137a13"/></linearGradient></defs><rect x=".5" y=".5" width="31" height="31" rx="3" fill="url(#g10)" stroke="#0e660e" stroke-width="1"/><path d="M4.4 4.6 H27.8 V7 H4.4 Z M4.4 25.6 H27.8 V28 H4.4 Z" fill="#fff"/><rect x="8.4" y="11" width="16" height="6.6" stroke="#fff" stroke-width="3.2" fill="none"/><path d="M9.4 20 L11.6 25.6 M22.8 20 L20.6 25.6" stroke="#fff" stroke-width="2.8"/></svg>
<svg class="abs" style="left:725px;top:473px" width="32" height="32" viewBox="0 0 32 32"><defs><linearGradient id="g11" x1="0" y1="0" x2="0" y2="1"><stop offset="0" stop-color="#4448ee"/><stop offset="1" stop-color="#3535d8"/></linearGradient></defs><rect x="0" y="0" width="32" height="32" rx="3" fill="url(#g11)"/><g fill="#fff"><ellipse cx="13.8" cy="8.5" rx="2.9" ry="3.7"/><ellipse cx="21.3" cy="8.5" rx="2.8" ry="3.7"/><ellipse cx="8.6" cy="14.4" rx="2.6" ry="4"/><ellipse cx="25.5" cy="14.4" rx="2.3" ry="3.8"/><path d="M17 14.8 Q13 14.8 10.5 19 Q7 23 7.8 25.5 Q8.5 28.2 12 28 L22 28 Q26.5 28 26.5 24.5 Q26.5 22 23.5 19 Q21 14.8 17 14.8 Z"/></g><text x="17" y="26" font-family="Liberation Sans" font-weight="bold" font-size="10" text-anchor="middle" fill="#3a3ae0">du</text></svg>
<svg class="abs" style="left:763px;top:473px" width="32" height="32" viewBox="0 0 32 32"><defs><radialGradient id="pk" cx=".5" cy=".6" r=".7"><stop offset="0" stop-color="#fce6ee"/><stop offset="1" stop-color="#f6c4d6"/></radialGradient><linearGradient id="pf" x1="0" y1="0" x2="0" y2="1"><stop offset="0" stop-color="#f8a8c6"/><stop offset="1" stop-color="#ea3a72"/></linearGradient></defs><rect x=".5" y=".5" width="31" height="31" rx="3" fill="url(#pk)" stroke="#f2bcd0"/><g fill="url(#pf)"><circle cx="16" cy="9" r="5.5"/><circle cx="9" cy="14" r="5.5"/><circle cx="23" cy="14" r="5.5"/><circle cx="11" cy="22" r="5.5"/><circle cx="21" cy="22" r="5.5"/><circle cx="16" cy="16.5" r="7"/></g><path d="M11.5 19.5 Q16 17 20.5 17.5 Q17 22 11.5 19.5 Z" fill="#fff"/></svg>
<svg class="abs" style="left:801px;top:473px" width="32" height="32" viewBox="0 0 32 32"><defs><linearGradient id="g13" x1="0" y1="0" x2="0" y2="1"><stop offset="0" stop-color="#4a6cc4"/><stop offset="1" stop-color="#30509c"/></linearGradient></defs><rect x=".5" y=".5" width="31" height="31" rx="3" fill="url(#g13)" stroke="#2e4890" stroke-width="1"/><path d="M17 29.5 V15.5 H13.3 V11.2 H17 V8.2 Q17 3 22.6 3 H28.2 V7.5 H24.3 Q22.3 7.5 22.3 9.6 V11.2 H27.6 L27 15.5 H22.3 V29.5 Z" fill="#fff"/></svg>
<svg class="abs" style="left:839px;top:473px" width="32" height="32" viewBox="0 0 32 32"><defs><linearGradient id="g14" x1="0" y1="0" x2="0" y2="1"><stop offset="0" stop-color="#0cd6fc"/><stop offset="1" stop-color="#26b6ea"/></linearGradient></defs><rect x="0" y="0" width="32" height="32" rx="3" fill="url(#g14)"/><path d="M9 6 Q9 3.5 12.2 3.5 Q15.5 3.5 15.5 6 V11 H23.5 Q26.5 11 26.5 14 Q26.5 17.2 23.5 17.2 H15.5 V19.5 Q15.5 21.4 17.5 21.4 H23.5 Q26.8 21.4 26.8 24.4 Q26.8 27.4 23.5 27.4 H15.5 Q9 27.4 9 21 Z" fill="#7cd0f0" stroke="#fff" stroke-width="1.6"/></svg>
<svg class="abs" style="left:877px;top:473px" width="32" height="32" viewBox="0 0 32 32"><defs><linearGradient id="g15" x1="0" y1="0" x2="0" y2="1"><stop offset="0" stop-color="#ec4654"/><stop offset="1" stop-color="#c4121c"/></linearGradient></defs><rect x=".5" y=".5" width="31" height="31" rx="4" fill="url(#g15)" stroke="#c80c16" stroke-width="1"/><path d="M5.9 5.8 H26 V26 H18 Q7 24 5.9 13 Z" fill="#f4f0f0"/><path d="M15.8 6 Q9.5 10 11 21.2 Q19 23 25.8 15" stroke="#d02030" stroke-width="1.1" fill="none"/></svg>
<svg class="abs" style="left:915px;top:473px" width="32" height="32" viewBox="0 0 32 32"><defs><radialGradient id="op" cx=".3" cy=".2" r=".9"><stop offset="0" stop-color="#ffa814"/><stop offset="1" stop-color="#ff6200"/></radialGradient></defs><rect x=".5" y=".5" width="31" height="31" rx="4" fill="url(#op)" stroke="#f25a00"/><path d="M13.6 4.8 H18.1 V13.9 H27.1 V18.1 H18.1 V27 H13.6 V18.1 H4.9 V13.9 H13.6 Z" fill="#fff"/></svg></div>

<div class="abs" style="left:237px;top:530px;font-size:16px;line-height:22px;white-space:nowrap">上一篇：工控测试：模拟PLC发脉冲给台达伺服驱动电机正反转</div>
<div class="abs" style="left:237px;top:566px;font-size:16px;line-height:22px;white-space:nowrap">下一篇：（小视频）见过民间这个活吗?</div>

<div class="abs" style="left:237px;top:601px;width:825px;height:220px;border:1px solid #ddd"></div>
<div class="abs" style="left:242px;top:607px;width:814px;height:100px;background:#fffdeb;border:1px solid #ffd76c;border-right:none"></div>
<div class="abs" style="left:1039px;top:608px;width:17px;height:98px;background:#f0f0f0"></div>
<svg class="abs" style="left:1039px;top:608px" width="17" height="98"><path d="M5 11.5h7l-3.5-4z" fill="#a3a3a3"/><path d="M5 86.5h7l-3.5 4z" fill="#a3a3a3"/></svg>
<div class="abs" style="left:252px;top:618px;width:785px;font-size:13px;letter-spacing:1px;line-height:21px;white-space:normal;color:#444">请遵守法律法规，文明发言，积极发表您的知识与见解。评论页面提示信息。天人文章管理系统，同步兼容手机版、平板、电脑。</div>
<div class="abs" style="left:246px;top:722px;width:806px;height:100px;border:1px solid #ff9a00;box-shadow:inset 0 1px 2px rgba(0,0,0,.08)"></div>

<!-- sidebar -->
<div class="side-btn" style="left:1100px;top:211px;background:#feed8c;color:#333;-webkit-text-stroke:0">小视频</div>
<div class="side-btn" style="left:1218px;top:211px">好文分享</div>
<div class="side-btn" style="left:1100px;top:254px">本地资讯</div>
<div class="side-btn" style="left:1218px;top:254px">个人照片</div>
<div class="side-btn" style="left:1100px;top:297px">热点视频</div>
<div class="side-btn" style="left:1218px;top:297px">急救常识</div>
<div class="side-btn" style="left:1100px;top:340px">健身常识</div>
<div class="side-btn" style="left:1218px;top:340px">幽默笑话</div>
<div class="side-btn" style="left:1100px;top:383px">热门知识</div>

<div class="abs" style="left:1115px;top:434px;line-height:20px;white-space:nowrap">短片：长江第一桥--武汉长江大桥</div>

<div class="abs" style="left:1106px;top:469px;font-size:16px;line-height:22px;font-weight:bold;color:#00aeff">热门文章</div>
<div class="abs" style="left:1092px;top:496px;width:255px;height:1px;background:#00aeff"></div>
<div class="li" style="top:506px;width:234px;overflow:hidden"><b>·</b>&nbsp; 工控测试：模拟PLC发脉冲给台达伺服驱动电机正反转</div>
<div class="li" style="top:534px"><b>·</b>&nbsp; <span class="red">（小视频）哈哈</span></div>
<div class="li" style="top:562px"><b>·</b>&nbsp; 工控经历：PLC更换电池后还是报警</div>
<div class="li" style="top:590px"><b>·</b>&nbsp; (小视频) 不用下班的交警，哈哈</div>
<div class="li" style="top:618px"><b>·</b>&nbsp; （小视频）美丽繁华的公安县MV</div>

<div class="abs" style="left:1092px;top:655px;width:255px;text-align:center;line-height:20px">短片：武汉黄鹤楼</div>

<div class="abs" style="left:1106px;top:690px;font-size:16px;line-height:22px;font-weight:bold;color:#00aeff">最新文章</div>
<div class="abs" style="left:1092px;top:717px;width:255px;height:1px;background:#00aeff"></div>
<div class="li" style="top:727px"><b>·</b>&nbsp; （小视频）美丽繁华的公安县MV</div>
<div class="li" style="top:755px"><b>·</b>&nbsp; <span class="red">（小视频）哈哈</span></div>
<div class="li" style="top:783px"><b>·</b>&nbsp; （小视频）感受下老师的滋味，哈哈</div>
<div class="abs" style="left:1583px;top:5px;width:1px;height:794px;background:#efefef;z-index:9"></div>
</body></html>
